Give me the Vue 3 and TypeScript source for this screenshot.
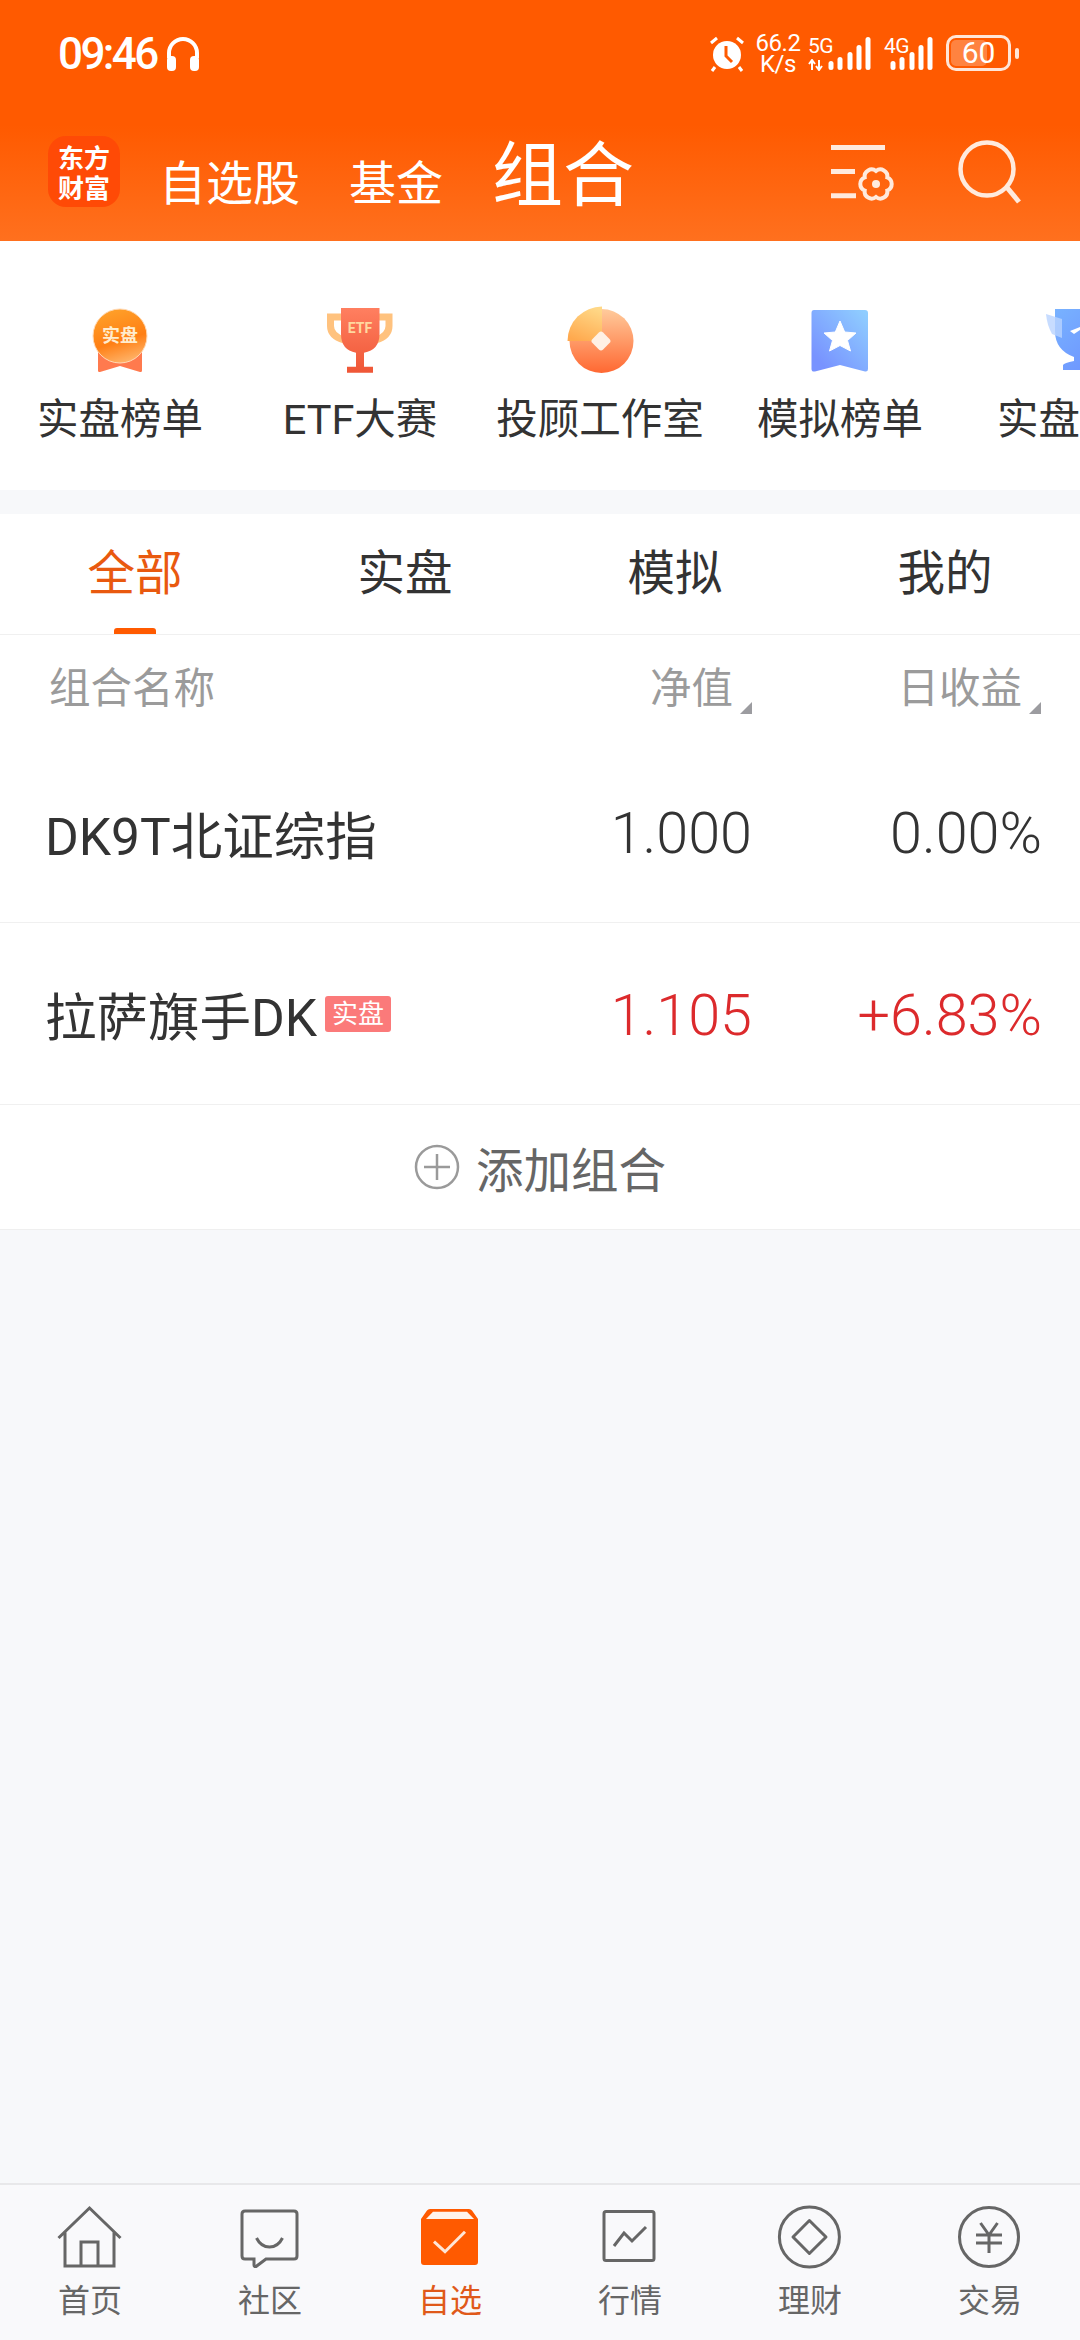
<script setup lang="ts">
const tabs = ["全部", "实盘", "模拟", "我的"];

const rows = [
  { name: "DK9T北证综指", tag: "", nav: "1.000", day: "0.00%", up: false },
  { name: "拉萨旗手DK", tag: "实盘", nav: "1.105", day: "+6.83%", up: true },
];

const signalX = [3, 12, 22, 31, 40];
const signalTop = [25, 21, 16, 9, 1];
</script>

<template>
  <div class="page">
    <header class="top">
      <!-- status bar -->
      <div class="status">
        <span class="time">09:46</span>
        <svg class="phones" width="36" height="36" viewBox="0 0 36 36">
          <path d="M4 22V17a14 14 0 0 1 28 0v5" fill="none" stroke="#fff" stroke-width="4" />
          <rect x="2" y="20" width="9" height="15" rx="4" fill="#fff" />
          <rect x="25" y="20" width="9" height="15" rx="4" fill="#fff" />
        </svg>
        <div class="status-right">
          <svg width="36" height="36" viewBox="0 0 36 36">
            <circle cx="18" cy="19" r="14" fill="#fff" />
            <path d="M17 10v10l6 6" fill="none" stroke="#ff5a00" stroke-width="3" />
            <path d="M2 7l6-5M34 7l-6-5M6 31l-3 4M30 31l3 4" stroke="#fff" stroke-width="3" />
          </svg>
          <div class="speed">
            <span>66.2</span>
            <span>K/s</span>
          </div>
          <div class="net">
            <span class="net-label">5G</span>
            <svg class="arrows" width="16" height="12" viewBox="0 0 16 12">
              <path d="M4 11V2M1 5l3-4 3 4M11 1v9M8 7l3 4 3-4" fill="none" stroke="#fff" stroke-width="2" />
            </svg>
          </div>
          <svg class="bars" width="45" height="36" viewBox="0 0 45 36">
            <rect v-for="(x, i) in signalX" :key="i" :x="x - 2.5" :y="signalTop[i]" width="5" :height="34 - signalTop[i]" rx="2.5" fill="#fff" />
          </svg>
          <div class="net net-4g">
            <span class="net-label">4G</span>
          </div>
          <svg class="bars bars-4g" width="45" height="36" viewBox="0 0 45 36">
            <rect v-for="(x, i) in signalX" :key="i" :x="x - 2.5" :y="signalTop[i]" width="5" :height="34 - signalTop[i]" rx="2.5" fill="#fff" />
          </svg>
          <div class="battery">
            <span class="battery-fill"></span>
            <span class="battery-num">60</span>
            <span class="battery-tip"></span>
          </div>
        </div>
      </div>

      <!-- title row -->
      <div class="title-row">
        <div class="logo"><span>东方</span><span>财富</span></div>
        <span class="title-tab t1">自选股</span>
        <span class="title-tab t2">基金</span>
        <span class="title-tab active">组合</span>
        <svg class="cfg" width="66" height="64" viewBox="0 0 66 64">
          <path d="M1 5.5H55M1 29.5H25M1 53.8H26" fill="none" stroke="#ffeadd" stroke-width="5" />
          <path d="M46 29A7 7 0 0 1 57.3 35.5A7 7 0 0 1 57.3 48.5A7 7 0 0 1 46 55A7 7 0 0 1 34.7 48.5A7 7 0 0 1 34.7 35.5A7 7 0 0 1 46 29Z" fill="none" stroke="#ffeadd" stroke-width="4" />
          <circle cx="46" cy="42" r="4" fill="#ffeadd" />
        </svg>
        <svg class="search" width="70" height="72" viewBox="0 0 70 72">
          <circle cx="32" cy="34" r="26.5" fill="none" stroke="#ffeadd" stroke-width="4.5" />
          <path d="M51.600 52L64 67" stroke="#ffeadd" stroke-width="5" />
        </svg>
      </div>
    </header>

    <!-- shortcuts -->
    <section class="shortcuts">
      <div class="shortcut">
        <svg width="80" height="80" viewBox="0 0 80 80">
          <defs>
            <linearGradient id="medalFace" x1="0.3" y1="0" x2="0.6" y2="1">
              <stop offset="0%" stop-color="#ffa12a" />
              <stop offset="60%" stop-color="#ff7f14" />
              <stop offset="100%" stop-color="#ffb46a" />
            </linearGradient>
          </defs>
          <path d="M18 48H62V68.500Q62 70.500 60 70L40 64L20 70Q18 70.500 18 68.500Z" fill="#ff7a4e" />
          <circle cx="40" cy="34" r="27" fill="url(#medalFace)" stroke="#ffd9b4" stroke-width="1" />
          <text x="40" y="40" text-anchor="middle" class="medal-text">实盘</text>
        </svg>
        <span class="shortcut-label">实盘榜单</span>
      </div>
      <div class="shortcut">
        <svg width="80" height="80" viewBox="0 0 80 80">
          <defs>
            <linearGradient id="cup" x1="0" y1="0" x2="0" y2="1">
              <stop offset="0%" stop-color="#ff7f60" />
              <stop offset="100%" stop-color="#ef5636" />
            </linearGradient>
          </defs>
          <path d="M23 15H10.500V24Q10.500 34 24 38" fill="none" stroke="#ffc27e" stroke-width="7" />
          <path d="M57 15H69V24Q69 34 56 38" fill="none" stroke="#ffc27e" stroke-width="7" />
          <path d="M21 6H59.500V32Q59.500 48 44 50.700V64.700H53V70.700H27V64.700H36V50.700Q21 48 21 32Z" fill="url(#cup)" />
          <text x="40" y="31" text-anchor="middle" class="etf-text">ETF</text>
        </svg>
        <span class="shortcut-label">ETF大赛</span>
      </div>
      <div class="shortcut">
        <svg width="80" height="80" viewBox="0 0 80 80">
          <defs>
            <linearGradient id="coin" x1="0.5" y1="0" x2="0.5" y2="1">
              <stop offset="0%" stop-color="#ffcb9c" />
              <stop offset="100%" stop-color="#ff6832" />
            </linearGradient>
            <linearGradient id="coinPart" x1="0.7" y1="0" x2="0.3" y2="1">
              <stop offset="0%" stop-color="#ffd887" />
              <stop offset="100%" stop-color="#ffa94e" />
            </linearGradient>
          </defs>
          <circle cx="41.500" cy="39" r="32" fill="url(#coin)" />
          <path d="M42 39V4.500A34.500 34.500 0 0 0 7.500 39Z" fill="url(#coinPart)" />
          <rect x="33.500" y="31.500" width="15" height="15" rx="3" transform="rotate(45 41 39)" fill="#fff0e4" />
        </svg>
        <span class="shortcut-label">投顾工作室</span>
      </div>
      <div class="shortcut">
        <svg width="80" height="80" viewBox="0 0 80 80">
          <defs>
            <linearGradient id="mark" x1="0.1" y1="0.8" x2="0.9" y2="0">
              <stop offset="0%" stop-color="#7893ff" />
              <stop offset="100%" stop-color="#8fcdff" />
            </linearGradient>
          </defs>
          <path d="M14 8H65Q68 8 68 11V67Q68 70 65 69.500L40 63L15 69.500Q11.500 70 11.500 67V11Q11.500 8 14 8Z" fill="url(#mark)" />
          <path d="M40 19L44.700 30L56 31L47.500 38.500L50.500 49L40 43.500L29.500 49L32.500 38.500L24 31L35.300 30Z" fill="#fff" stroke="#fff" stroke-linejoin="round" />
        </svg>
        <span class="shortcut-label">模拟榜单</span>
      </div>
      <div class="shortcut">
        <svg width="80" height="80" viewBox="0 0 80 80">
          <defs>
            <linearGradient id="blueCup" x1="0" y1="0" x2="1" y2="1">
              <stop offset="0%" stop-color="#78b2ff" />
              <stop offset="100%" stop-color="#6b8dff" />
            </linearGradient>
          </defs>
          <path d="M15 7H80V60H42V62H46V68H23V63Q24 61 34 59V55Q15 48 15 29Z" fill="url(#blueCup)" />
          <path d="M6 12L22 17V36L12 32Q7 23 6 12Z" fill="#b9d3ff" opacity="0.8" />
          <path d="M30 29L40 25V28L34 32Z" fill="#fff" />
        </svg>
        <span class="shortcut-label">实盘榜单</span>
      </div>
    </section>

    <div class="band"></div>

    <!-- tabs -->
    <nav class="tabs">
      <div v-for="(t, i) in tabs" :key="t" class="tab" :class="{ on: i === 0 }">{{ t }}</div>
    </nav>

    <!-- list -->
    <section class="list">
      <div class="list-head">
        <span class="col-name">组合名称</span>
        <span class="col-nav"><span class="sort">净值</span></span>
        <span class="col-day"><span class="sort">日收益</span></span>
      </div>
      <div v-for="r in rows" :key="r.name" class="row">
        <div class="row-name">
          <span>{{ r.name }}</span>
          <span v-if="r.tag" class="tag">{{ r.tag }}</span>
        </div>
        <span class="row-nav" :class="{ up: r.up }">{{ r.nav }}</span>
        <span class="row-day" :class="{ up: r.up }">{{ r.day }}</span>
      </div>
      <div class="add">
        <svg width="46" height="46" viewBox="0 0 46 46">
          <circle cx="23" cy="23" r="21" fill="none" stroke="#9a9a9a" stroke-width="2.500" />
          <path d="M10 23H36M23 10V36" stroke="#9a9a9a" stroke-width="2.500" />
        </svg>
        <span>添加组合</span>
      </div>
    </section>

    <div class="fill"></div>

    <!-- bottom nav -->
    <footer class="bottom">
      <div class="item">
        <svg width="72" height="72" viewBox="0 0 72 72" class="ico">
          <path d="M4.500 35L35.500 5L66.500 35M11 29.500V63H60V29.500M27 63V39H44V63" />
        </svg>
        <span>首页</span>
      </div>
      <div class="item">
        <svg width="72" height="72" viewBox="0 0 72 72" class="ico">
          <path d="M11 8H60Q63 8 63 11V53Q63 56 60 56H32L22 63.500Q20 64 20 62V56H11Q8 56 8 53V11Q8 8 11 8Z" />
          <path d="M22.500 35Q27 44 35.500 44Q44 44 48.500 35" />
        </svg>
        <span>社区</span>
      </div>
      <div class="item on">
        <svg width="72" height="72" viewBox="0 0 72 72">
          <path d="M16 6H55Q57 6 58 7.500L64 16V59Q64 62 61 62H10Q7 62 7 59V16L13 7.500Q14 6 16 6Z" fill="#ff5a00" />
          <path d="M12 16L19 8.700H53L60 16Z" fill="#fff3ea" />
          <path d="M20 38.700L31 48.700L51 28.700" fill="none" stroke="#ffe6d6" stroke-width="3" />
        </svg>
        <span>自选</span>
      </div>
      <div class="item">
        <svg width="72" height="72" viewBox="0 0 72 72" class="ico">
          <rect x="10" y="8.500" width="50" height="49" rx="2" />
          <path d="M20 43L30 30L38 38L52 24" />
        </svg>
        <span>行情</span>
      </div>
      <div class="item">
        <svg width="72" height="72" viewBox="0 0 72 72" class="ico">
          <circle cx="35.400" cy="34" r="30" />
          <path d="M35.400 17.500L52 34L35.400 50.500L19 34Z" stroke-linejoin="round" />
        </svg>
        <span>理财</span>
      </div>
      <div class="item">
        <svg width="72" height="72" viewBox="0 0 72 72" class="ico">
          <circle cx="35" cy="34" r="29.500" />
          <path d="M26.500 20L35 32L43.500 20M22 32H48M22 40H48M35 32V50" />
        </svg>
        <span>交易</span>
      </div>
    </footer>
  </div>
</template>

<style scoped>
.page {
  width: 1080px;
  min-height: 2340px;
  display: flex;
  flex-direction: column;
  background: #f7f8fa;
  font-family: Roboto, "Noto Sans CJK SC", sans-serif;
  color: #333;
  overflow: hidden;
}

/* orange header */
.top {
  height: 241px;
  background: linear-gradient(180deg, #ff5a00 0%, #ff5a00 52%, #ff701e 100%);
  color: #fff;
}

.status {
  height: 108px;
  display: flex;
  align-items: center;
  padding: 0 69px 0 58px;
}

.time {
  font-size: 44px;
  font-weight: 500;
  letter-spacing: -2.6px;
  line-height: 1;
}

.phones {
  margin-left: 8px;
}

.status-right {
  margin-left: auto;
  display: flex;
  align-items: center;
}

.speed {
  width: 42px;
  display: flex;
  flex-direction: column;
  align-items: center;
  margin-left: 12px;
  font-size: 24px;
  line-height: 21px;
  letter-spacing: -0.5px;
}

.net {
  width: 32px;
  height: 36px;
  margin-left: 9px;
  display: flex;
  flex-direction: column;
}

.net-label {
  font-size: 21px;
  line-height: 20px;
  letter-spacing: -0.5px;
}

.arrows {
  margin-top: 3px;
}

.net-4g {
  width: 23px;
  margin-left: 11px;
}

.bars {
  margin-left: -12px;
}

.bars-4g {
  margin-left: -17px;
}

.battery {
  width: 65px;
  height: 36px;
  margin-left: 11px;
  margin-bottom: 2px;
  border: 3px solid #ffe6d8;
  border-radius: 10px;
  box-sizing: border-box;
  display: flex;
  align-items: center;
  justify-content: center;
  position: relative;
}

.battery-fill {
  position: absolute;
  left: 2px;
  top: 2px;
  bottom: 2px;
  width: 36px;
  border-radius: 5px;
  background: rgba(255, 255, 255, 0.25);
}

.battery-num {
  position: relative;
  font-size: 30px;
  line-height: 1;
}

.battery-tip {
  position: absolute;
  right: -11px;
  top: 10px;
  width: 4px;
  height: 11px;
  border-radius: 2px;
  background: #ffe6d8;
}

.title-row {
  height: 133px;
  display: flex;
  align-items: flex-end;
  padding-left: 48px;
  padding-bottom: 34px;
  box-sizing: border-box;
  font-family: "Noto Sans CJK SC", sans-serif;
}

.logo {
  width: 72px;
  height: 71px;
  border-radius: 18px;
  background: #ff4a06;
  display: flex;
  flex-direction: column;
  align-items: center;
  justify-content: center;
  font-size: 26px;
  line-height: 30px;
  font-weight: 700;
}

.title-tab {
  font-size: 47px;
  line-height: 48px;
  margin-bottom: 3px;
}

.t1 {
  margin-left: 39px;
}

.t2 {
  margin-left: 49px;
}

.title-tab.active {
  font-size: 71px;
  line-height: 74px;
  margin-left: 49px;
  margin-bottom: 1px;
}

.cfg {
  margin-left: auto;
  margin-bottom: 1px;
}

.search {
  margin-left: 59px;
  margin-right: 55px;
}

/* shortcuts */
.shortcuts {
  height: 249px;
  background: #fff;
  display: flex;
  overflow: hidden;
}

.shortcut {
  flex: 0 0 240px;
  display: flex;
  flex-direction: column;
  align-items: center;
  padding-top: 61px;
}

.shortcut-label {
  margin-top: 10px;
  font-size: 41.5px;
  line-height: 56px;
  white-space: nowrap;
  color: #333;
}

.medal-text {
  font-size: 18px;
  font-weight: 700;
  fill: #ffeccd;
}

.etf-text {
  font-size: 14px;
  font-weight: 700;
  fill: #ffd8a0;
}

.band {
  height: 24px;
  background: #f7f8fa;
}

/* tabs */
.tabs {
  display: flex;
  height: 121px;
  background: #fff;
  border-bottom: 1px solid #f0f0f0;
  box-sizing: border-box;
}

.tab {
  flex: 1;
  position: relative;
  font-size: 47.500px;
  line-height: 120px;
  text-align: center;
  color: #333;
}

.tab.on {
  color: #e9590f;
}

.tab.on::after {
  content: "";
  position: absolute;
  left: 50%;
  bottom: 0;
  width: 42px;
  height: 6px;
  margin-left: -21px;
  border-radius: 3px 3px 0 0;
  background: #ff5a00;
}

/* list */
.list {
  background: #fff;
}

.list-head {
  height: 107px;
  display: flex;
  align-items: flex-start;
  padding: 26px 40px 0 49px;
  box-sizing: border-box;
  font-size: 41.500px;
  line-height: 56px;
  color: #9b9b9b;
}

.col-name {
  flex: 1;
}

.col-nav {
  padding-right: 17px;
}

.col-day {
  width: 290px;
  padding-right: 18px;
  box-sizing: border-box;
  text-align: right;
}

.sort {
  position: relative;
  display: inline-block;
}

.sort::after {
  content: "";
  position: absolute;
  right: -19px;
  bottom: 3px;
  width: 12px;
  height: 12px;
  background: #9c9ca0;
  clip-path: polygon(100% 0, 100% 100%, 0 100%);
}

.row {
  height: 181px;
  display: flex;
  align-items: center;
  padding: 0 38px 0 45px;
  border-bottom: 1px solid #f0f0f0;
  box-sizing: border-box;
  color: #333;
}

.row:nth-of-type(3) {
  height: 182px;
}

.row-name {
  flex: 1;
  display: flex;
  align-items: center;
  font-size: 51.500px;
}

.tag {
  width: 66px;
  height: 36px;
  margin-left: 8px;
  border-radius: 3px;
  background: #fb7a7a;
  color: #fff;
  font-size: 26px;
  line-height: 36px;
  text-align: center;
}

.row-nav {
  font-size: 57.500px;
  font-weight: 350;
  padding-top: 3px;
}

.row-day {
  width: 290px;
  text-align: right;
  font-size: 57.500px;
  font-weight: 350;
  padding-top: 3px;
}

.up {
  color: #dc2a2c;
}

.add {
  height: 125px;
  display: flex;
  align-items: center;
  justify-content: center;
  gap: 16px;
  border-bottom: 1px solid #efefef;
  box-sizing: border-box;
  font-size: 47.500px;
  color: #666;
}

.fill {
  flex: 1;
}

/* bottom nav */
.bottom {
  height: 157px;
  display: flex;
  background: #f9f9fb;
  border-top: 2px solid #e8e8ea;
  box-sizing: border-box;
}

.item {
  flex: 1;
  display: flex;
  flex-direction: column;
  align-items: center;
  padding-top: 18px;
  font-size: 32px;
  line-height: 40px;
  color: #666;
}

.item svg {
  margin-bottom: 6px;
}

.item.on {
  color: #e0591a;
}

.ico {
  fill: none;
  stroke: #666;
  stroke-width: 3;
}
</style>
